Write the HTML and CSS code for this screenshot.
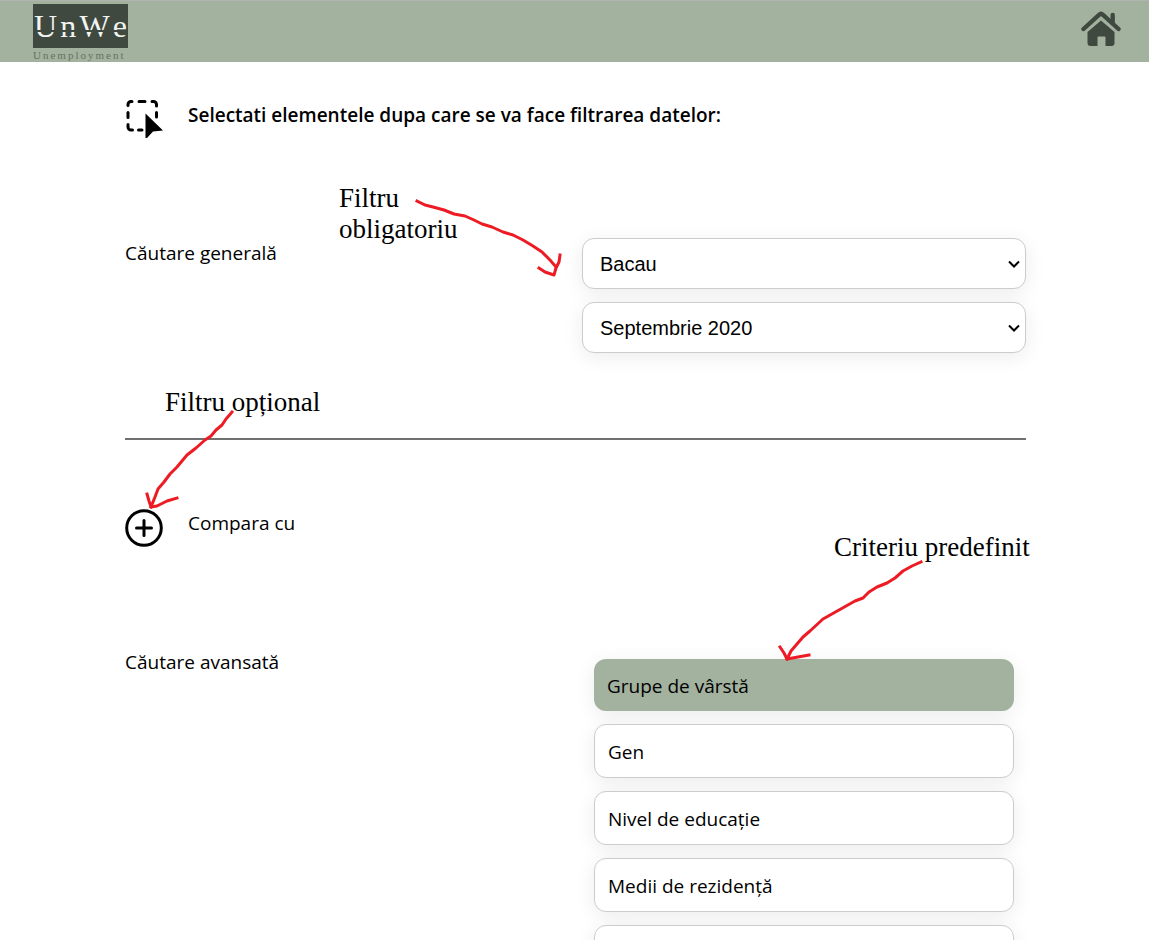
FILE: index.html
```html
<!DOCTYPE html>
<html lang="ro">
<head>
<meta charset="utf-8">
<meta name="viewport" content="width=device-width, initial-scale=1">
<title>UnWe</title>
<link rel="stylesheet" href="styles.css">
</head>
<body>
<header class="topbar">
  <a class="logo" href="#">
    <span class="logo-mark"><span>U</span><span>n</span><span>W</span><span>e</span></span>
    <span class="logo-sub">Unemployment</span>
  </a>
  <a class="home" href="#" aria-label="Home">
    <svg width="40" height="38" viewBox="0 0 40 38" fill="#3f493f">
      <path d="M20 10.500 33.500 22V33a3 3 0 0 1-3 3H24.500V27.500a1 1 0 0 0-1-1H17.500a1 1 0 0 0-1 1V36H9.500a3 3 0 0 1-3-3V22Z"/>
      <path d="M2.500 19 18 4.800Q20 3 22 4.800L37.500 19" fill="none" stroke="#3f493f" stroke-width="4.400" stroke-linecap="round" stroke-linejoin="round"/>
      <path d="M29.500 5a2.200 2.200 0 0 1 4.400 0V15l-4.400-4Z"/>
    </svg>
  </a>
</header>

<main class="page">
  <div class="row">
    <svg class="icon" width="38" height="40" viewBox="0 0 38 40">
      <g fill="none" stroke="#000" stroke-width="3" stroke-linecap="round">
        <path d="M3 7.500V6.500a3 3 0 0 1 3-3H7M14 3.500H20M27 3.500H28.500a3 3 0 0 1 3 3V8M3 14.500V19.500M3 26.500V29a3 3 0 0 0 3 3H7.500M13.500 32H17M31.500 14.500V19"/>
      </g>
      <path d="M20.500 15.500 38 32.500 28 33.500 22 40H20.500Z"/>
    </svg>
    <h1 class="title">Selectati elementele dupa care se va face filtrarea datelor:</h1>
  </div>

  <section class="section general">
    <h2 class="label">Căutare generală</h2>
    <div class="selects">
      <select class="select" aria-label="Judet"><option>Bacau</option></select>
      <select class="select" aria-label="Luna"><option>Septembrie 2020</option></select>
    </div>
  </section>

  <hr class="divider">

  <div class="row compare">
    <button class="add" id="add" type="button" aria-labelledby="add-label">
      <svg width="38" height="38" viewBox="0 0 38 38" fill="none" stroke="#000" stroke-width="3" stroke-linecap="round">
        <circle cx="19" cy="19" r="17.300"/>
        <path d="M19 11.500V26.500M11.500 19H26.500"/>
      </svg>
    </button>
    <label class="label" id="add-label" for="add">Compara cu</label>
  </div>

  <section class="section advanced">
    <h2 class="label">Căutare avansată</h2>
    <div class="options">
      <button class="option selected" type="button" aria-pressed="true">Grupe de vârstă</button>
      <button class="option" type="button">Gen</button>
      <button class="option" type="button">Nivel de educație</button>
      <button class="option" type="button">Medii de rezidență</button>
      <button class="option" type="button"></button>
    </div>
  </section>
</main>

<div class="notes">
  <p class="note note-required">Filtru<br>obligatoriu</p>
  <p class="note note-optional">Filtru opțional</p>
  <p class="note note-criterion">Criteriu predefinit</p>
  <svg class="arrows" width="1149" height="940" viewBox="0 0 1149 940" fill="none" stroke="#ed1c24" stroke-width="3" stroke-linecap="square" stroke-linejoin="round">
    <path d="M417 201 425 205 433 207 444 210 454 214 465 216 474 220 482 224 492 227 503 232 513 235 523 240 533 246 542 252 550 260 556 267"/>
    <path d="M560 255 559 262 556 268 554 275 545 272 539 268"/>
    <path d="M232 412 226 419 222 425 216 430 211 436 205 440 196 448 187 455 182 461 177 467 170 474 164 482 158 489 155 497 151 507"/>
    <path d="M147 494 149 501 151 507 157 506 167 501 177 498"/>
    <path d="M921 562 912 566 903 571 895 578 887 583 877 587 869 592 863 598 855 601 839 610 823 619 810 631 803 637 797 644 791 651 787 659"/>
    <path d="M780 647 784 653 787 659 798 657 809 655"/>
  </svg>
</div>
</body>
</html>
```
FILE: styles.css
```css
* { box-sizing: border-box; }
body {
  margin: 0;
  height: 100vh;
  overflow: hidden;
  position: relative;
  background: #fff;
  color: #000;
  font-family: "Open Sans", "Noto Sans", sans-serif;
}
.topbar {
  display: flex;
  justify-content: space-between;
  align-items: flex-start;
  height: 62px;
  padding: 3px 28px 0 33px;
  border-top: 1px solid #b0b4b0;
  background: #a3b19f;
  overflow: hidden;
}
.logo {
  display: block;
  width: 95px;
  text-decoration: none;
}
.logo-mark {
  display: flex;
  justify-content: space-between;
  position: relative;
  height: 44px;
  padding: 0 1px;
  background: #3f493f;
  color: #f1f4f0;
  font: 32px/44px "Liberation Serif", serif;
}
.logo-mark::after {
  content: "";
  position: absolute;
  left: 0;
  right: 0;
  top: 26px;
  height: 2px;
  background: #3f493f;
}
.logo-sub {
  display: block;
  color: #66735f;
  font: 11px/14px "Liberation Serif", serif;
  letter-spacing: 2px;
}
.home { margin-top: 6px; line-height: 0; }
.page { margin: 0 123px 0 125px; }
.row {
  display: flex;
  align-items: flex-start;
  gap: 25px;
  padding-top: 36px;
}
.icon { flex: none; }
.title {
  margin: 4px 0 0;
  font-size: 19px;
  line-height: 26px;
  font-weight: 600;
}
.label {
  margin: 0;
  font-size: 19px;
  line-height: 28px;
  font-weight: 400;
}
.section {
  display: flex;
  justify-content: space-between;
  align-items: flex-start;
}
.general { margin-top: 100px; }
.general .label { padding-top: 1px; }
.selects {
  display: flex;
  flex-direction: column;
  gap: 13px;
  width: 444px;
}
.select {
  appearance: none;
  height: 51px;
  padding: 0 17px;
  border: 1px solid #ccc;
  border-radius: 12px;
  background: #fff url("data:image/svg+xml,%3Csvg xmlns='http://www.w3.org/2000/svg' width='12' height='8' fill='none' stroke='%23000' stroke-width='2'%3E%3Cpath d='M1 1.500 6 6.500 11 1.500'/%3E%3C/svg%3E") no-repeat right 5px center;
  color: #000;
  font: 20px "Liberation Sans", Arial, sans-serif;
  box-shadow: 0 4px 20px rgba(0, 0, 0, 0.08);
}
.divider {
  height: 2px;
  margin: 85px 0 0;
  border: 0;
  background: #707070;
}
.compare { padding-top: 69px; }
.add {
  padding: 0;
  border: 0;
  background: none;
  line-height: 0;
}
.advanced { margin-top: 101px; }
.options {
  display: flex;
  flex-direction: column;
  gap: 13px;
  width: 420px;
  margin-right: 12px;
  padding-top: 11px;
}
.option {
  height: 54px;
  padding: 1px 13px 0;
  border: 1px solid #ccc;
  border-radius: 12px;
  background: #fff;
  color: #000;
  text-align: left;
  font: 400 19px/28px "Open Sans", "Noto Sans", sans-serif;
  box-shadow: 0 4px 20px rgba(0, 0, 0, 0.08);
}
.option.selected {
  height: 52px;
  border: 0;
  background: #a3b19f;
}
.note {
  position: absolute;
  margin: 0;
  white-space: nowrap;
  font: 27px/31px "Liberation Serif", "Times New Roman", serif;
}
.note-required { left: 339px; top: 183px; }
.note-optional { left: 165px; top: 387px; }
.note-criterion { left: 834px; top: 532px; }
.arrows {
  position: absolute;
  left: 0;
  top: 0;
  pointer-events: none;
}
```
